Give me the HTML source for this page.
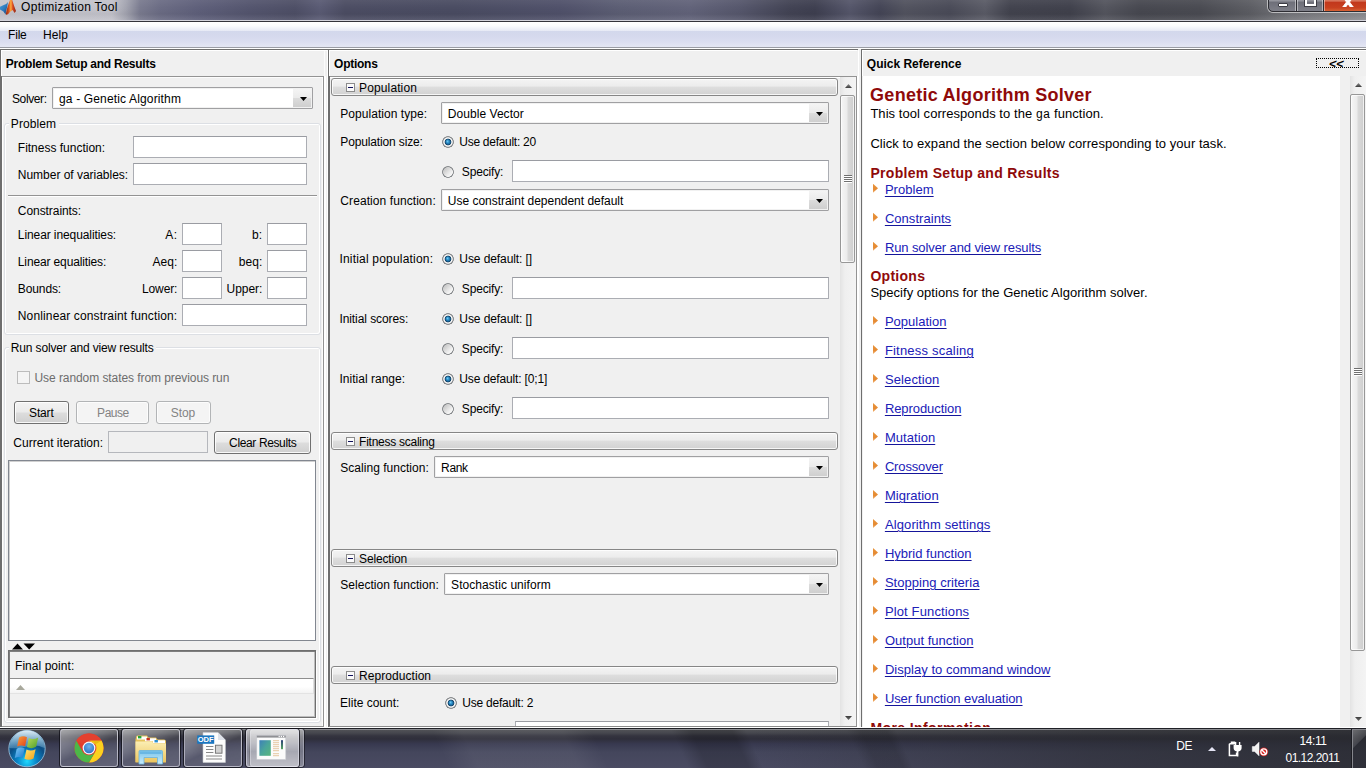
<!DOCTYPE html>
<html lang="en">
<head>
<meta charset="utf-8">
<title>Optimization Tool</title>
<style>
html,body{margin:0;padding:0}
body{width:1366px;height:768px;overflow:hidden;position:relative;background:#f0f0f0;font-family:"Liberation Sans",sans-serif;font-size:12px;line-height:12px;color:#000;-webkit-font-smoothing:antialiased}
.t{position:absolute;white-space:pre;font-size:12px;line-height:12px}
.a{position:absolute;box-sizing:border-box}
.lnk{color:#2020b8;text-decoration:underline;text-decoration-color:#15159a;text-underline-offset:1.5px;text-decoration-thickness:1px}
/* title bar */
#titlebar{left:0;top:0;width:1366px;height:22px;background:
 linear-gradient(to bottom,rgba(255,255,255,0) 0,rgba(255,255,255,0) 20px,#d2d2da 20px,#d2d2da 21px,#33333a 21px,#33333a 22px),
 linear-gradient(to bottom,rgba(255,255,255,.06) 0,rgba(255,255,255,0) 8px,rgba(0,0,0,.04) 14px,rgba(255,255,255,.08) 20px),
 linear-gradient(to right,#c6c6cd 0px,#c2c2ca 112px,#a3a4b0 126px,#7a7b8f 140px,#6b6c84 160px,#5e5f7a 200px,#54556e 250px,#4e4f66 295px,#5a5b74 320px,#4c4d63 345px,#4a4c62 455px,#50516a 560px,#5c5e74 620px,#62637a 690px,#56576c 740px,#424354 790px,#3e3f50 815px,#55566a 850px,#444556 880px,#52535f 905px,#4a4b58 950px,#5a5b66 985px,#42434e 1010px,#40414c 1070px,#54555e 1105px,#474850 1140px,#4a4b52 1200px,#5c5d63 1250px,#75767b 1290px,#8c8c90 1366px)}
#winbtns{left:1268px;top:-8px;width:104px;height:20px;border:1px solid #2d2d33;border-radius:0 0 5px 5px;box-shadow:0 0 0 1px rgba(255,255,255,.55);overflow:hidden;background:linear-gradient(to bottom,#b4b5bc 0,#92939b 45%,#6e6f79 50%,#7e7f88 100%)}
#winbtns .b{position:absolute;top:0;height:19px}
#wmin{left:0;width:27px;border-right:1px solid #2d2d33;box-shadow:inset -1px 0 0 rgba(255,255,255,.45)}
#wmax{left:28px;width:26px;border-right:1px solid #2d2d33;box-shadow:inset -1px 0 0 rgba(255,255,255,.45),inset 1px 0 0 rgba(255,255,255,.45)}
#wclose{left:55px;width:50px;background:linear-gradient(to bottom,#e8a895 0,#d67258 42%,#c2381c 50%,#c8411f 78%,#dc6c3a 100%);box-shadow:inset 1px 0 0 rgba(255,255,255,.45)}
/* menubar */
#menubar{left:0;top:22px;width:1366px;height:26px;background:linear-gradient(to bottom,#ffffff 0,#fafbfd 4px,#f1f3f9 6px,#e6e9f5 9px,#d3d8ec 9px,#d5d9ed 14px,#dbdef0 20px,#e4e6f3 25px,#9a9ca4 25px,#9a9ca4 26px)}
/* generic borders */
.dk{background:#6e6e6e}
.wh{background:#fff}
.gr{background:#939393}
/* inputs */
.inp{background:#fff;border:1px solid #abadb3;border-top-color:#9a9ca2}
.inpd{background:#f0f0f0;border:1px solid #b5b7bc}
.combo{background:#fff;border:1px solid #a0a0a2;border-radius:1px;box-shadow:inset 0 0 0 1px #f1f1f1}
.combo .ab{position:absolute;right:1px;top:1px;bottom:1px;width:18px;background:linear-gradient(to bottom,#f4f4f4 0,#ebebeb 48%,#dcdcdc 52%,#cfcfcf 100%)}
.combo .ab:after{content:"";position:absolute;left:7px;top:8px;width:7px;height:4px;background:#000;clip-path:polygon(0 0,100% 0,50% 100%)}
.btn{border:1px solid #707070;border-radius:3px;background:linear-gradient(to bottom,#f3f3f3 0,#ebebeb 48%,#dddddd 52%,#cfcfcf 100%);box-shadow:inset 0 0 0 1px rgba(255,255,255,.85)}
.btnd{border:1px solid #b2b4b6;border-radius:3px;background:#f4f4f4;box-shadow:inset 0 0 0 1px #fcfcfc}
.sec{border:1px solid #868686;border-radius:3px;background:linear-gradient(to bottom,#f4f4f4 0,#ececec 45%,#dedede 50%,#d2d2d2 100%);box-shadow:inset 0 0 0 1px rgba(255,255,255,.8)}
.minus{left:14px;top:4px;width:9px;height:9px;border:1px solid #8c8c8c;background:#fafafa}
.minus:after{content:"";position:absolute;left:1px;top:3px;width:5px;height:1px;background:#10105a}
.radio{width:12px;height:12px;border-radius:50%;background:radial-gradient(circle at 50% 50%,rgba(255,255,255,0) 0,rgba(255,255,255,0) 4.6px,#85888b 5.1px,#85888b 5.7px,rgba(133,136,139,0) 6.2px),linear-gradient(135deg,#bdbdbd 0,#cfcfcf 30%,#ececec 60%,#fdfdfd 85%)}
.radio.on{background:radial-gradient(circle at 46% 44%,#7ad0f4 0,rgba(80,180,230,.6) 1px,rgba(48,153,214,0) 2.2px),radial-gradient(circle at 50% 50%,#2c93d0 0,#2484c0 1.2px,#1b689c 2.2px,#163f60 3.1px,rgba(22,63,96,0) 3.7px),radial-gradient(circle at 50% 50%,#fff 0,#fff 3.4px,#ececec 4.4px,#85888b 5.1px,#85888b 5.7px,rgba(133,136,139,0) 6.2px)}
.grp{border:1px solid #dcdfe4;border-radius:3px;box-shadow:inset 1px 1px 0 #fff, inset -1px -1px 0 #fff}
/* scrollbars */
.sbtrack{background:linear-gradient(to right,#e3e3e3 0,#efefef 30%,#f4f4f4 100%)}
.thumb{border:1px solid #979797;border-radius:2px;background:linear-gradient(to right,#f6f6f6 0,#ececec 45%,#dadada 55%,#cdcdcd 100%);box-shadow:inset 0 0 0 1px rgba(255,255,255,.7)}
.grip{background:repeating-linear-gradient(to bottom,#6f6f6f 0,#6f6f6f 1px,#fff 1px,#fff 2px)}
.aup{background:linear-gradient(to bottom,#8a8a8a,#3c3c3c);clip-path:polygon(0 100%,50% 0,100% 100%)}
.adn{background:linear-gradient(to bottom,#3c3c3c,#6a6a6a);clip-path:polygon(0 0,100% 0,50% 100%)}
.tri{width:5px;height:9px;background:linear-gradient(to bottom,#e8953c 0,#e58a33 60%,#f0b070 100%);clip-path:polygon(0 0,100% 50%,0 100%)}
/* taskbar */
#taskbar{left:0;top:728px;width:1366px;height:40px;overflow:hidden;background:
 linear-gradient(to bottom,#1f2026 0,#1f2026 1px,#8c8d92 1px,#8c8d92 2px,rgba(0,0,0,0) 2px),
 linear-gradient(to right,rgba(40,40,46,0) 0,rgba(40,40,46,0) 55%,rgba(40,41,46,.55) 80%,rgba(40,41,46,.8) 100%),
 linear-gradient(65deg,rgba(255,255,255,0) 407px,rgba(255,255,255,.06) 434px,rgba(255,255,255,.06) 525px,rgba(255,255,255,0) 552px,rgba(0,0,0,0) 624px,rgba(0,0,0,.2) 642px,rgba(0,0,0,.2) 679px,rgba(0,0,0,0) 692px,rgba(0,0,0,0) 783px,rgba(0,0,0,.15) 796px,rgba(0,0,0,.15) 819px,rgba(0,0,0,0) 828px),
 linear-gradient(to bottom,#505156 0,#505156 2px,#46474e 5px,#34343f 8px,#2f2f3b 11px,#383950 16px,#44465c 24px,#4a4b62 40px)}
.tb{top:1px;height:38px;border:1px solid rgba(225,225,235,.62);border-radius:3px;background:linear-gradient(155deg,rgba(255,255,255,.5) 0,rgba(255,255,255,.3) 30%,rgba(255,255,255,.1) 52%,rgba(255,255,255,.14) 100%);box-shadow:0 0 0 1px rgba(15,15,22,.75)}
.tb.act{background:linear-gradient(to bottom,rgba(255,255,255,.66) 0,rgba(255,255,255,.5) 35%,rgba(255,255,255,.36) 60%,rgba(255,255,255,.46) 100%)}

</style>
</head>
<body>
<div id="titlebar" class="a">
<svg class="a" style="left:0;top:0" width="18" height="16" viewBox="0 0 18 16">
<defs><linearGradient id="mg" x1="0" y1="0" x2="1" y2="0"><stop offset="0" stop-color="#8a2210"/><stop offset=".3" stop-color="#d8541c"/><stop offset=".5" stop-color="#ffae40"/><stop offset=".68" stop-color="#d84a22"/><stop offset="1" stop-color="#8e2412"/></linearGradient>
<linearGradient id="mb" x1="0" y1="0" x2="1" y2="1"><stop offset="0" stop-color="#46a0dc"/><stop offset=".55" stop-color="#2c78bc"/><stop offset="1" stop-color="#15305a"/></linearGradient></defs>
<path d="M0 6.8 L3.2 5.2 L6.2 4 L8 2 L7.2 7 L6 11 L5.6 14.6 L3.4 11.4 L0 9.6 Z" fill="url(#mb)"/>
<path d="M5.8 14.6 L6.6 10 Q8.6 3.5 10 0 L12.2 0 Q14 6 16 11 L14.6 12.9 L12.6 10 Q10 11.4 8.2 14 Q7 15 5.8 14.6 Z" fill="url(#mg)"/>
</svg>
<span class="t" style="left:21.12px;top:1.00px;letter-spacing:0.274px;">Optimization Tool</span>
<div id="winbtns" class="a"><div id="wmin" class="b"></div><div id="wmax" class="b"></div><div id="wclose" class="b"></div></div>
<div class="a " style="left:1278px;top:3px;width:10px;height:4px;background:#fff;border:1px solid #3c3c44;border-radius:1px"></div>
<div class="a " style="left:1305px;top:-3px;width:11px;height:9px;border:2px solid #fff;border-top-width:3px;outline:1px solid #3c3c44"></div>
<svg class="a" style="left:1341.5px;top:-3.5px" width="12" height="10" viewBox="0 0 16 11" preserveAspectRatio="none"><path d="M1 0 L5 0 L8 4 L11 0 L15 0 L10 5.5 L15 11 L11 11 L8 7.5 L5 11 L1 11 L6 5.5 Z" fill="#fff" stroke="#fff" stroke-width="1.1" stroke-linejoin="round"/></svg>
</div>
<div id="menubar" class="a"></div>
<span class="t" style="left:8.12px;top:29.00px;letter-spacing:-0.216px;">File</span>
<span class="t" style="left:43.12px;top:29.00px;letter-spacing:0.048px;">Help</span>
<div class="a wh" style="left:0px;top:48px;width:1366px;height:1px;"></div>
<div class="a dk" style="left:0px;top:49px;width:328px;height:1px;"></div>
<div class="a dk" style="left:0px;top:49px;width:1px;height:678px;"></div>
<div class="a wh" style="left:1px;top:50px;width:326px;height:1px;"></div>
<div class="a wh" style="left:1px;top:50px;width:1px;height:677px;"></div>
<div class="a wh" style="left:327px;top:50px;width:1px;height:677px;"></div>
<div class="a wh" style="left:324px;top:50px;width:1px;height:26px;opacity:.7"></div>
<div class="a dk" style="left:328px;top:49px;width:530px;height:1px;"></div>
<div class="a dk" style="left:328px;top:49px;width:1px;height:679px;"></div>
<div class="a wh" style="left:329px;top:50px;width:528px;height:1px;"></div>
<div class="a wh" style="left:329px;top:50px;width:1px;height:678px;"></div>
<div class="a wh" style="left:858px;top:50px;width:1px;height:678px;"></div>
<div class="a dk" style="left:861px;top:49px;width:505px;height:1px;"></div>
<div class="a dk" style="left:861px;top:49px;width:1px;height:679px;"></div>
<div class="a wh" style="left:862px;top:50px;width:504px;height:1px;"></div>
<div class="a wh" style="left:862px;top:50px;width:1px;height:26px;"></div>
<span class="t" style="left:5.82px;top:58.00px;letter-spacing:-0.250px;font-weight:bold;">Problem Setup and Results</span>
<div class="a gr" style="left:1px;top:76px;width:323px;height:1px;"></div>
<div class="a dk" style="left:1px;top:76px;width:1px;height:651px;"></div>
<div class="a wh" style="left:2px;top:77px;width:1px;height:649px;"></div>
<div class="a gr" style="left:323px;top:76px;width:1px;height:651px;"></div>
<div class="a gr" style="left:2px;top:726px;width:322px;height:1px;"></div>
<div class="a wh" style="left:2px;top:77px;width:321px;height:1px;opacity:.8"></div>
<div class="a wh" style="left:322px;top:77px;width:1px;height:649px;opacity:.8"></div>
<div class="a wh" style="left:324px;top:76px;width:2px;height:651px;"></div>
<span class="t" style="left:12.02px;top:93.00px;letter-spacing:-0.397px;">Solver:</span>
<div class="a combo" style="left:52px;top:87px;width:261px;height:22px;"><div class="ab"></div></div>
<span class="t" style="left:59.02px;top:93.00px;letter-spacing:0.152px;">ga - Genetic Algorithm</span>
<div class="a grp" style="left:4px;top:123px;width:317px;height:212px;"></div>
<div class="a " style="left:9px;top:117px;width:50px;height:14px;background:#f0f0f0"></div>
<span class="t" style="left:10.82px;top:118.00px;letter-spacing:0.085px;">Problem</span>
<span class="t" style="left:17.82px;top:142.00px;letter-spacing:-0.006px;">Fitness function:</span>
<div class="a inp" style="left:133px;top:136px;width:174px;height:22px;"></div>
<span class="t" style="left:17.82px;top:169.00px;letter-spacing:-0.022px;">Number of variables:</span>
<div class="a inp" style="left:133px;top:163px;width:174px;height:22px;"></div>
<div class="a gr" style="left:8px;top:195px;width:309px;height:1px;"></div>
<div class="a wh" style="left:8px;top:196px;width:309px;height:1px;"></div>
<span class="t" style="left:17.82px;top:205.00px;letter-spacing:-0.063px;">Constraints:</span>
<span class="t" style="left:17.82px;top:229.00px;letter-spacing:-0.090px;">Linear inequalities:</span>
<span class="t" style="left:165.32px;top:229.00px;letter-spacing:0.318px;">A:</span>
<div class="a inp" style="left:182px;top:223px;width:40px;height:22px;"></div>
<span class="t" style="left:252.12px;top:229.00px;letter-spacing:0.082px;">b:</span>
<div class="a inp" style="left:267px;top:223px;width:40px;height:22px;"></div>
<span class="t" style="left:17.82px;top:256.00px;letter-spacing:-0.136px;">Linear equalities:</span>
<span class="t" style="left:152.52px;top:256.00px;letter-spacing:0.023px;">Aeq:</span>
<div class="a inp" style="left:182px;top:250px;width:40px;height:22px;"></div>
<span class="t" style="left:238.82px;top:256.00px;letter-spacing:0.030px;">beq:</span>
<div class="a inp" style="left:267px;top:250px;width:40px;height:22px;"></div>
<span class="t" style="left:17.82px;top:283.00px;letter-spacing:-0.110px;">Bounds:</span>
<span class="t" style="left:142.02px;top:283.00px;letter-spacing:-0.125px;">Lower:</span>
<div class="a inp" style="left:182px;top:277px;width:40px;height:22px;"></div>
<span class="t" style="left:226.52px;top:283.00px;letter-spacing:-0.042px;">Upper:</span>
<div class="a inp" style="left:267px;top:277px;width:40px;height:22px;"></div>
<span class="t" style="left:17.82px;top:310.00px;letter-spacing:0.135px;">Nonlinear constraint function:</span>
<div class="a inp" style="left:182px;top:304px;width:125px;height:22px;"></div>
<div class="a grp" style="left:4px;top:347px;width:317px;height:376px;"></div>
<div class="a " style="left:9px;top:341px;width:147px;height:14px;background:#f0f0f0"></div>
<span class="t" style="left:10.82px;top:342.00px;letter-spacing:-0.146px;">Run solver and view results</span>
<div class="a " style="left:17px;top:371px;width:13px;height:13px;border:1px solid #bcbcbc;background:#f4f4f4"></div>
<span class="t" style="left:34.52px;top:372.00px;letter-spacing:-0.075px;color:#6d6d6d;">Use random states from previous run</span>
<div class="a btn" style="left:14px;top:401px;width:55px;height:23px;"></div>
<span class="t" style="left:29.12px;top:407.00px;letter-spacing:-0.173px;">Start</span>
<div class="a btnd" style="left:76px;top:401px;width:73px;height:23px;"></div>
<span class="t" style="left:97.12px;top:407.00px;letter-spacing:-0.470px;color:#838383;">Pause</span>
<div class="a btnd" style="left:156px;top:401px;width:55px;height:23px;"></div>
<span class="t" style="left:170.82px;top:407.00px;letter-spacing:-0.102px;color:#838383;">Stop</span>
<span class="t" style="left:13.32px;top:437.00px;letter-spacing:0.023px;">Current iteration:</span>
<div class="a inpd" style="left:108px;top:431px;width:100px;height:22px;"></div>
<div class="a btn" style="left:214px;top:431px;width:97px;height:23px;"></div>
<span class="t" style="left:229.12px;top:437.00px;letter-spacing:-0.373px;">Clear Results</span>
<div class="a " style="left:8px;top:460px;width:308px;height:181px;background:#fff;border:1px solid #828790;box-shadow:inset 1px 1px 0 #d0d0d0"></div>
<svg class="a" style="left:12px;top:643px" width="24" height="7" viewBox="0 0 24 7"><path d="M0 6.5 L5.5 0.5 L11 6.5 Z M11.5 0.5 L23 0.5 L17.2 6.5 Z" fill="#000"/></svg>
<div class="a " style="left:8px;top:650px;width:308px;height:68px;border:1px solid #6f6f6f;box-shadow:inset 1px 1px 0 #7e7e7e, inset -1px -1px 0 #bdbdbd, 1px 1px 0 #fff"></div>
<span class="t" style="left:15.02px;top:660.00px;letter-spacing:0.048px;">Final point:</span>
<div class="a " style="left:10px;top:678px;width:304px;height:16px;background:linear-gradient(to bottom,#fff 0,#fff 55%,#f3f3f3 100%);border-top:1px solid #8e8e8e;border-bottom:1px solid #e3e3e3;border-right:1px solid #e0e0e0"></div>
<div class="a " style="left:16px;top:685px;width:9px;height:5px;background:#a8a89c;clip-path:polygon(0 100%,50% 0,100% 100%)"></div>
<span class="t" style="left:334.12px;top:58.00px;letter-spacing:-0.264px;font-weight:bold;">Options</span>
<div class="a gr" style="left:329px;top:76px;width:528px;height:1px;"></div>
<div class="a dk" style="left:329px;top:76px;width:1px;height:651px;"></div>
<div class="a wh" style="left:330px;top:77px;width:510px;height:1px;"></div>
<div class="a gr" style="left:856px;top:76px;width:1px;height:651px;"></div>
<div class="a wh" style="left:857px;top:76px;width:1px;height:651px;"></div>
<div class="a sec" style="left:331px;top:78px;width:507px;height:18px;"><div class="a minus"></div></div>
<span class="t" style="left:359.12px;top:82.00px;letter-spacing:0.116px;">Population</span>
<div class="a sec" style="left:331px;top:432px;width:507px;height:18px;"><div class="a minus"></div></div>
<span class="t" style="left:359.12px;top:436.00px;letter-spacing:-0.260px;">Fitness scaling</span>
<div class="a sec" style="left:331px;top:549px;width:507px;height:18px;"><div class="a minus"></div></div>
<span class="t" style="left:359.12px;top:553.00px;letter-spacing:-0.155px;">Selection</span>
<div class="a sec" style="left:331px;top:666px;width:507px;height:18px;"><div class="a minus"></div></div>
<span class="t" style="left:359.12px;top:670.00px;letter-spacing:0.049px;">Reproduction</span>
<span class="t" style="left:340.32px;top:108.00px;letter-spacing:0.045px;">Population type:</span>
<div class="a combo" style="left:441px;top:102px;width:388px;height:22px;"><div class="ab"></div></div>
<span class="t" style="left:447.82px;top:108.00px;letter-spacing:0.045px;">Double Vector</span>
<span class="t" style="left:340.32px;top:136.00px;letter-spacing:-0.141px;">Population size:</span>
<div class="a radio on" style="left:442px;top:136px;width:12px;height:12px;"></div>
<span class="t" style="left:459.32px;top:136.00px;letter-spacing:-0.283px;">Use default: 20</span>
<div class="a radio" style="left:442px;top:166px;width:12px;height:12px;"></div>
<span class="t" style="left:461.82px;top:166.00px;letter-spacing:-0.151px;">Specify:</span>
<div class="a inp" style="left:512px;top:160px;width:317px;height:22px;"></div>
<span class="t" style="left:340.32px;top:195.00px;letter-spacing:0.079px;">Creation function:</span>
<div class="a combo" style="left:441px;top:189px;width:388px;height:22px;"><div class="ab"></div></div>
<span class="t" style="left:447.82px;top:195.00px;letter-spacing:-0.020px;">Use constraint dependent default</span>
<span class="t" style="left:339.42px;top:253.00px;letter-spacing:0.200px;">Initial population:</span>
<div class="a radio on" style="left:442px;top:253px;width:12px;height:12px;"></div>
<span class="t" style="left:459.32px;top:253.00px;letter-spacing:-0.084px;">Use default: []</span>
<div class="a radio" style="left:442px;top:283px;width:12px;height:12px;"></div>
<span class="t" style="left:461.82px;top:283.00px;letter-spacing:-0.151px;">Specify:</span>
<div class="a inp" style="left:512px;top:277px;width:317px;height:22px;"></div>
<span class="t" style="left:339.42px;top:313.00px;letter-spacing:-0.077px;">Initial scores:</span>
<div class="a radio on" style="left:442px;top:313px;width:12px;height:12px;"></div>
<span class="t" style="left:459.32px;top:313.00px;letter-spacing:-0.084px;">Use default: []</span>
<div class="a radio" style="left:442px;top:343px;width:12px;height:12px;"></div>
<span class="t" style="left:461.82px;top:343.00px;letter-spacing:-0.151px;">Specify:</span>
<div class="a inp" style="left:512px;top:337px;width:317px;height:22px;"></div>
<span class="t" style="left:339.42px;top:373.00px;letter-spacing:0.022px;">Initial range:</span>
<div class="a radio on" style="left:442px;top:373px;width:12px;height:12px;"></div>
<span class="t" style="left:459.32px;top:373.00px;letter-spacing:-0.164px;">Use default: [0;1]</span>
<div class="a radio" style="left:442px;top:403px;width:12px;height:12px;"></div>
<span class="t" style="left:461.82px;top:403.00px;letter-spacing:-0.151px;">Specify:</span>
<div class="a inp" style="left:512px;top:397px;width:317px;height:22px;"></div>
<span class="t" style="left:340.32px;top:462.00px;letter-spacing:0.025px;">Scaling function:</span>
<div class="a combo" style="left:434px;top:456px;width:395px;height:22px;"><div class="ab"></div></div>
<span class="t" style="left:441.12px;top:462.00px;letter-spacing:-0.384px;">Rank</span>
<span class="t" style="left:340.32px;top:579.00px;letter-spacing:0.022px;">Selection function:</span>
<div class="a combo" style="left:444px;top:573px;width:385px;height:22px;"><div class="ab"></div></div>
<span class="t" style="left:451.12px;top:579.00px;letter-spacing:0.053px;">Stochastic uniform</span>
<span class="t" style="left:340.12px;top:697.00px;letter-spacing:-0.016px;">Elite count:</span>
<div class="a radio on" style="left:445px;top:697px;width:12px;height:12px;"></div>
<span class="t" style="left:462.22px;top:697.00px;letter-spacing:-0.226px;">Use default: 2</span>
<div class="a inp" style="left:515px;top:721px;width:314px;height:22px;"></div>
<div class="a sbtrack" style="left:840px;top:77px;width:16px;height:650px;"></div>
<div class="a aup" style="left:845px;top:84px;width:7px;height:4px;"></div>
<div class="a thumb" style="left:840px;top:95px;width:15px;height:168px;"></div>
<div class="a grip" style="left:844px;top:175px;width:8px;height:8px;"></div>
<div class="a adn" style="left:845px;top:716px;width:7px;height:4px;"></div>
<span class="t" style="left:866.82px;top:58.00px;letter-spacing:-0.016px;font-weight:bold;">Quick Reference</span>
<div class="a " style="left:1316px;top:58px;width:43px;height:10px;border:1px dotted #000"></div>
<span class="t" style="left:1328.70px;top:57.75px;letter-spacing:-0.042px;font-size:12.5px;line-height:12.5px;font-weight:bold;transform:skewX(-12deg);">&lt;&lt;</span>
<div class="a " style="left:863px;top:76px;width:477px;height:652px;background:#fff"></div>
<div class="a sbtrack" style="left:1350px;top:76px;width:16px;height:652px;"></div>
<div class="a aup" style="left:1355px;top:83px;width:7px;height:4px;"></div>
<div class="a thumb" style="left:1350px;top:94px;width:15px;height:557px;"></div>
<div class="a grip" style="left:1354px;top:368px;width:8px;height:8px;"></div>
<div class="a adn" style="left:1355px;top:717px;width:7px;height:4px;"></div>
<span class="t" style="left:870.08px;top:86.00px;letter-spacing:0.268px;font-size:18px;line-height:18px;font-weight:bold;color:#8f0a0a;">Genetic Algorithm Solver</span>
<span class="t" style="left:870.38px;top:107.00px;letter-spacing:0.050px;font-size:13px;line-height:13px;color:#000;">This tool corresponds to the <span style="font-family:'Liberation Mono',monospace;font-size:12px">ga</span> function.</span>
<span class="t" style="left:870.38px;top:137.00px;letter-spacing:0.047px;font-size:13px;line-height:13px;">Click to expand the section below corresponding to your task.</span>
<span class="t" style="left:870.44px;top:166.00px;letter-spacing:0.297px;font-size:14px;line-height:14px;font-weight:bold;color:#8f0a0a;">Problem Setup and Results</span>
<div class="a tri" style="left:873px;top:183.7px;width:5px;height:9px;"></div>
<a class="t lnk" style="left:884.88px;top:183.00px;letter-spacing:0.050px;font-size:13px;line-height:13px;">Problem</a>
<div class="a tri" style="left:873px;top:212.7px;width:5px;height:9px;"></div>
<a class="t lnk" style="left:884.88px;top:212.00px;letter-spacing:0.047px;font-size:13px;line-height:13px;">Constraints</a>
<div class="a tri" style="left:873px;top:241.7px;width:5px;height:9px;"></div>
<a class="t lnk" style="left:884.88px;top:241.00px;letter-spacing:-0.100px;font-size:13px;line-height:13px;">Run solver and view results</a>
<span class="t" style="left:870.44px;top:269.00px;letter-spacing:0.267px;font-size:14px;line-height:14px;font-weight:bold;color:#8f0a0a;">Options</span>
<span class="t" style="left:870.38px;top:286.00px;letter-spacing:0.025px;font-size:13px;line-height:13px;">Specify options for the Genetic Algorithm solver.</span>
<div class="a tri" style="left:873px;top:315.9px;width:5px;height:9px;"></div>
<a class="t lnk" style="left:884.88px;top:315.00px;letter-spacing:0.022px;font-size:13px;line-height:13px;">Population</a>
<div class="a tri" style="left:873px;top:344.9px;width:5px;height:9px;"></div>
<a class="t lnk" style="left:884.88px;top:344.00px;letter-spacing:0.199px;font-size:13px;line-height:13px;">Fitness scaling</a>
<div class="a tri" style="left:873px;top:373.9px;width:5px;height:9px;"></div>
<a class="t lnk" style="left:884.88px;top:373.00px;letter-spacing:0.121px;font-size:13px;line-height:13px;">Selection</a>
<div class="a tri" style="left:873px;top:402.9px;width:5px;height:9px;"></div>
<a class="t lnk" style="left:884.88px;top:402.00px;letter-spacing:-0.072px;font-size:13px;line-height:13px;">Reproduction</a>
<div class="a tri" style="left:873px;top:431.9px;width:5px;height:9px;"></div>
<a class="t lnk" style="left:884.88px;top:431.00px;letter-spacing:0.062px;font-size:13px;line-height:13px;">Mutation</a>
<div class="a tri" style="left:873px;top:460.9px;width:5px;height:9px;"></div>
<a class="t lnk" style="left:884.88px;top:460.00px;letter-spacing:-0.142px;font-size:13px;line-height:13px;">Crossover</a>
<div class="a tri" style="left:873px;top:489.9px;width:5px;height:9px;"></div>
<a class="t lnk" style="left:884.88px;top:489.00px;letter-spacing:0.033px;font-size:13px;line-height:13px;">Migration</a>
<div class="a tri" style="left:873px;top:518.9px;width:5px;height:9px;"></div>
<a class="t lnk" style="left:884.88px;top:518.00px;letter-spacing:0.125px;font-size:13px;line-height:13px;">Algorithm settings</a>
<div class="a tri" style="left:873px;top:547.9px;width:5px;height:9px;"></div>
<a class="t lnk" style="left:884.88px;top:547.00px;font-size:13px;line-height:13px;">Hybrid function</a>
<div class="a tri" style="left:873px;top:576.9px;width:5px;height:9px;"></div>
<a class="t lnk" style="left:884.88px;top:576.00px;letter-spacing:0.036px;font-size:13px;line-height:13px;">Stopping criteria</a>
<div class="a tri" style="left:873px;top:605.9px;width:5px;height:9px;"></div>
<a class="t lnk" style="left:884.88px;top:605.00px;letter-spacing:0.143px;font-size:13px;line-height:13px;">Plot Functions</a>
<div class="a tri" style="left:873px;top:634.9px;width:5px;height:9px;"></div>
<a class="t lnk" style="left:884.88px;top:634.00px;letter-spacing:0.027px;font-size:13px;line-height:13px;">Output function</a>
<div class="a tri" style="left:873px;top:663.9px;width:5px;height:9px;"></div>
<a class="t lnk" style="left:884.88px;top:663.00px;letter-spacing:0.033px;font-size:13px;line-height:13px;">Display to command window</a>
<div class="a tri" style="left:873px;top:692.9px;width:5px;height:9px;"></div>
<a class="t lnk" style="left:884.88px;top:692.00px;letter-spacing:-0.076px;font-size:13px;line-height:13px;">User function evaluation</a>
<span class="t" style="left:870.44px;top:721.00px;letter-spacing:0.401px;font-size:14px;line-height:14px;font-weight:bold;color:#8f0a0a;">More Information</span>
<div class="a " style="left:329px;top:726px;width:528px;height:1px;background:#8c8c8c"></div>
<div class="a wh" style="left:0px;top:727px;width:1366px;height:1px;"></div>
<div id="taskbar" class="a">
<svg class="a" style="left:6px;top:1px" width="42" height="39" viewBox="0 0 42 39">
<defs>
<radialGradient id="orb" cx="50%" cy="85%" r="75%"><stop offset="0" stop-color="#1fd8ff"/><stop offset=".35" stop-color="#0a86c8"/><stop offset=".7" stop-color="#0c4f86"/><stop offset="1" stop-color="#2a6a98"/></radialGradient>
<linearGradient id="orbhi" x1="0" y1="0" x2="0" y2="1"><stop offset="0" stop-color="#e8f4fb" stop-opacity=".95"/><stop offset="1" stop-color="#8ec3e0" stop-opacity=".35"/></linearGradient>
<linearGradient id="fr" x1="0" y1="0" x2="1" y2="1"><stop offset="0" stop-color="#f9a03a"/><stop offset="1" stop-color="#e0401a"/></linearGradient>
<linearGradient id="fg" x1="0" y1="0" x2="1" y2="1"><stop offset="0" stop-color="#b9dc5a"/><stop offset="1" stop-color="#4f9f2c"/></linearGradient>
<linearGradient id="fb" x1="0" y1="0" x2="1" y2="1"><stop offset="0" stop-color="#7cc8f5"/><stop offset="1" stop-color="#1879cf"/></linearGradient>
<linearGradient id="fy" x1="0" y1="0" x2="1" y2="1"><stop offset="0" stop-color="#ffe36a"/><stop offset="1" stop-color="#f3a21e"/></linearGradient>
</defs>
<circle cx="21" cy="19.6" r="18.2" fill="url(#orb)" stroke="#9fcbe6" stroke-opacity=".8" stroke-width="1"/>
<path d="M3.5 19 A17.5 17.5 0 0 1 38.5 19 Q30 15 21 17.5 Q12 20 3.5 19 Z" fill="url(#orbhi)"/>
<g transform="translate(20.5 19) scale(1.17) translate(-19.6 -18.6)"><path d="M13.2 9.6 Q16.6 7.6 20 9.4 L18.4 17.2 Q15.2 15.6 11.6 17.4 Z" fill="url(#fr)"/>
<path d="M21.6 10 Q25.2 12 29.6 9.6 L27.8 17.6 Q23.8 19.8 20 17.8 Z" fill="url(#fg)"/>
<path d="M11.2 19.2 Q14.8 17.4 18 19 L16.2 27 Q13 25.4 9.6 27.2 Z" fill="url(#fb)"/>
<path d="M19.6 19.8 Q23.4 21.8 27.4 19.6 L25.6 27.6 Q21.6 29.6 17.8 27.8 Z" fill="url(#fy)"/></g>
</svg>
<div class="a tb" style="left:60px;width:58px"></div>
<div class="a tb" style="left:122px;width:58px"></div>
<div class="a tb" style="left:184px;width:58px"></div>
<div class="a tb act" style="left:250px;width:54px;opacity:.75"></div>
<div class="a tb act" style="left:246px;width:53px"></div>
<svg class="a" style="left:73px;top:4px" width="32" height="32" viewBox="-16 -16 32 32">
<defs><radialGradient id="cb" cx="50%" cy="35%" r="70%"><stop offset="0" stop-color="#6fb2ec"/><stop offset="1" stop-color="#2a6fc4"/></radialGradient></defs>
<circle r="14.6" fill="#e03c2c"/>
<path d="M-12.64 -7.3 A14.6 14.6 0 0 1 12.64 -7.3 L0 -7.3 A7.3 7.3 0 0 0 -6.32 -3.65 Z" fill="#e4412f"/>
<path d="M12.64 -7.3 A14.6 14.6 0 0 1 0 14.6 L6.32 3.65 A7.3 7.3 0 0 0 6.32 -3.65 L0 -7.3 Z" fill="#fbd11f"/>
<path d="M0 14.6 A14.6 14.6 0 0 1 -12.64 -7.3 L-6.32 3.65 A7.3 7.3 0 0 0 6.32 3.65 Z" fill="#4cb748"/>
<path d="M12.64 -7.3 L0 -7.3 A7.3 7.3 0 0 1 6.32 -3.65 Z" fill="#e9b913"/>
<circle r="6.4" fill="#f4f8fb"/>
<circle r="5.2" fill="url(#cb)"/>
</svg>
<svg class="a" style="left:134px;top:6px" width="34" height="31" viewBox="0 0 34 31">
<defs><linearGradient id="fo" x1="0" y1="0" x2="0" y2="1"><stop offset="0" stop-color="#fbeeb4"/><stop offset="1" stop-color="#ecc55e"/></linearGradient>
<linearGradient id="bl" x1="0" y1="0" x2="0" y2="1"><stop offset="0" stop-color="#7cc4ea"/><stop offset="1" stop-color="#c8ecfb"/></linearGradient></defs>
<path d="M2 4 L2 3 Q2 1.5 3.5 1.5 L13 1.5 L14.5 3.5 L22 3.5 L23.5 5.5 L30 5.5 Q32 5.5 32 7.5 L32 28 L1.5 28 L1.5 5 Z" fill="#e6c25c"/>
<rect x="3" y="2.5" width="10" height="3" fill="#fff"/><rect x="4" y="2" width="3.4" height="2.4" fill="#27a537"/>
<rect x="11" y="4.3" width="11" height="3" fill="#fff"/><rect x="12.5" y="4" width="3.4" height="2.4" fill="#c8321e"/>
<rect x="19" y="6.3" width="12" height="3" fill="#fff"/><rect x="20.5" y="6" width="3.4" height="2.4" fill="#2a8fd0"/>
<path d="M1.5 7.5 L18 7.5 L19.5 9.5 L32 9.5 L32 28.5 L1.5 28.5 Z" fill="url(#fo)"/>
<path d="M5 17.5 Q5 16.5 6 16.5 L27.5 16.5 Q28.5 16.5 28.5 17.5 L28.5 30 L23.5 30 L23.5 23.5 L10 23.5 L10 30 L5 30 Z" fill="url(#bl)" stroke="#6ab4de" stroke-width=".8"/>
<path d="M6 17.5 L27.5 17.5 L27.5 20 L6 20 Z" fill="#5fb0e0" opacity=".75"/>
</svg>
<svg class="a" style="left:196px;top:4px" width="32" height="32" viewBox="0 0 32 32">
<path d="M7 .6 L22 .6 L29.4 8 L29.4 30.4 L7 30.4 Z" fill="#fdfdfd" stroke="#c9ccd2" stroke-width=".6"/>
<path d="M22 .6 L22 8 L29.4 8 Z" fill="#dfe3ea"/>
<rect x="1.2" y="3.4" width="17" height="8.4" fill="#1b76c0"/>
<text x="9.7" y="10.4" font-family="Liberation Sans, sans-serif" font-weight="bold" font-size="7.6" fill="#fff" text-anchor="middle">ODF</text>
<rect x="19.4" y="13.2" width="6.6" height="8" fill="#d2d2d2" stroke="#6e6e6e" stroke-width=".9"/>
<g stroke="#7a7a7a" stroke-width=".9"><path d="M10 14.5H17.4M10 17.5H17.4M10 20.5H17.4M10 24H26M10 27H26"/></g>
</svg>
<svg class="a" style="left:256px;top:7px" width="31" height="26" viewBox="0 0 31 26">
<defs><linearGradient id="wg" x1="0" y1="0" x2="1" y2="1"><stop offset="0" stop-color="#3d7fb8"/><stop offset=".5" stop-color="#4aa59a"/><stop offset="1" stop-color="#58b57c"/></linearGradient>
<linearGradient id="wb" x1="0" y1="0" x2="0" y2="1"><stop offset="0" stop-color="#2b3f78"/><stop offset="1" stop-color="#58a860"/></linearGradient></defs>
<rect x=".8" y=".6" width="29" height="24" fill="#fbfbfb" stroke="#c4c6cc" stroke-width=".6"/>
<rect x=".8" y=".6" width="29" height="2" fill="#8f9094"/>
<rect x="22.6" y=".9" width="1.2" height="1.2" fill="#fff"/><rect x="24.8" y=".9" width="1.2" height="1.2" fill="#fff"/><rect x="27" y=".9" width="1.2" height="1.2" fill="#fff"/>
<rect x="3.4" y="5.2" width="11.4" height="15.6" fill="url(#wg)"/>
<g stroke="#e6c7a2" stroke-width="1"><path d="M17 5.7H23M17 7.7H23M17 9.7H23M17 11.7H23M17 13.7H23M17 15.7H23M17 18.7H23M17 20.7H23"/></g>
<rect x="25" y="5.2" width="2" height="9" fill="url(#wb)"/>
</svg>
</div>
<span class="t" style="left:1176.32px;top:740.00px;letter-spacing:-0.600px;color:#fff;">DE</span>
<div class="a " style="left:1208px;top:747px;width:8px;height:4px;background:#e4e4f4;clip-path:polygon(0 100%,50% 0,100% 100%)"></div>
<svg class="a" style="left:1228px;top:741px" width="16" height="17" viewBox="0 0 16 17">
<path d="M3.5 2.2 L3.5 1.2 L6.5 1.2 L6.5 2.2 M1.4 2.8 L8 2.8 M1.4 2.8 L1.4 14.4 L8.6 14.4 L8.6 11.5" fill="none" stroke="#fff" stroke-width="1.5"/>
<path d="M7.6 1 L7.6 4 M11.6 1 L11.6 4" stroke="#fff" stroke-width="1.4"/>
<path d="M5.6 4 L13.6 4 L13.6 7 Q13.6 10 10.4 10.4 L10.4 15.6 L8.8 15.6 L8.8 10.4 Q5.6 10 5.6 7 Z" fill="#fff"/>
</svg>
<svg class="a" style="left:1251px;top:741px" width="19" height="17" viewBox="0 0 19 17">
<path d="M1.3 5.6 L3.6 5.6 L8 1.2 L8 14.8 L3.6 10.4 L1.3 10.4 Z" fill="#f2f2f2" stroke="#fff" stroke-width=".5"/>
<circle cx="12.8" cy="10.8" r="4.4" fill="#d81e1e"/>
<circle cx="12.8" cy="10.8" r="3.0" fill="none" stroke="#fff" stroke-width="1.3"/>
<path d="M10.7 8.7 L14.9 12.9" stroke="#fff" stroke-width="1.4"/>
</svg>
<span class="t" style="left:1299.52px;top:735.00px;letter-spacing:-0.412px;color:#fff;">14:11</span>
<span class="t" style="left:1285.52px;top:752.00px;letter-spacing:-0.539px;color:#fff;">01.12.2011</span>
<div class="a " style="left:1352px;top:729px;width:14px;height:40px;border:1px solid #85868c;border-right:none;background:linear-gradient(135deg,rgba(255,255,255,.28) 0,rgba(255,255,255,.12) 35%,rgba(255,255,255,0) 36%);box-shadow:-1px 0 0 #1c1c22"></div>
</body>
</html>
